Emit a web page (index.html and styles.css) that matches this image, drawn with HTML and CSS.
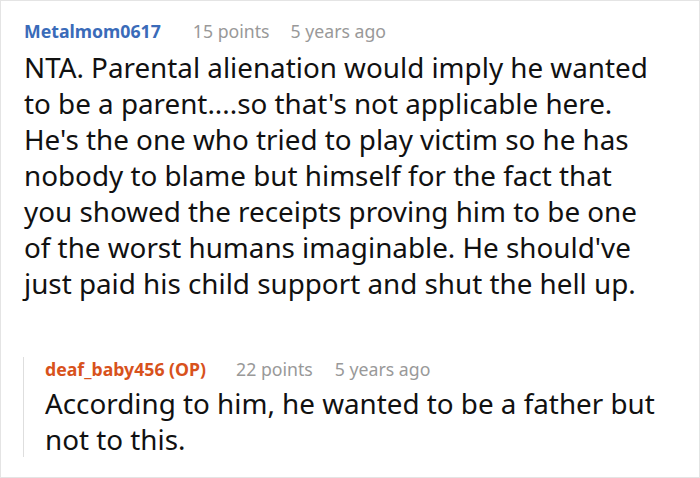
FILE: index.html
```html
<!DOCTYPE html>
<html>
<head>
<meta charset="utf-8">
<link rel="stylesheet" href="styles.css">
</head>
<body>
<div class="page">
  <div class="comment">
    <div class="meta">
      <span class="user">Metalmom0617</span>
      <span class="points">15 points</span>
      <span class="time">5 years ago</span>
    </div>
    <div class="text">NTA. Parental alienation would imply he wanted<br>to be a parent....so that's not applicable here.<br>He's the one who tried to play victim so he has<br>nobody to blame but himself for the fact that<br>you showed the receipts proving him to be one<br>of the worst humans imaginable. He should've<br>just paid his child support and shut the hell up.</div>
  </div>
  <div class="reply">
    <div class="meta reply-meta">
      <span class="user op">deaf_baby456 (OP)</span>
      <span class="points">22 points</span>
      <span class="time">5 years ago</span>
    </div>
    <div class="text">According to him, he wanted to be a father but<br>not to this.</div>
  </div>
</div>
</body>
</html>
```
FILE: styles.css
```css
html, body { margin: 0; padding: 0; background: #fff; }
.page {
  width: 700px;
  height: 478px;
  box-sizing: border-box;
  border: 1px solid #e4e4e4;
  padding: 18px 0 0 23px;
  font-family: "Noto Sans", "Open Sans", sans-serif;
  color: #111;
}
.meta {
  display: flex;
  align-items: baseline;
  font-size: 17.7px;
  line-height: 24px;
  color: #999;
  white-space: nowrap;
}
.user { font-weight: 700; color: #3a6bb9; margin-right: 32px; }
.user.op { color: #d8521c; margin-right: 30px; }
.points { margin-right: 21px; }
.reply .points { margin-right: 22px; }
.text {
  margin-top: 6px;
  font-size: 27.8px;
  line-height: 36px;
  white-space: nowrap;
}
.reply {
  margin-top: 66px;
  margin-left: -1px;
  border-left: 1px solid #dedede;
  padding-left: 21px;
}
.reply-meta { margin-top: -10px; }
.reply .text { margin-top: 4px; }
```
